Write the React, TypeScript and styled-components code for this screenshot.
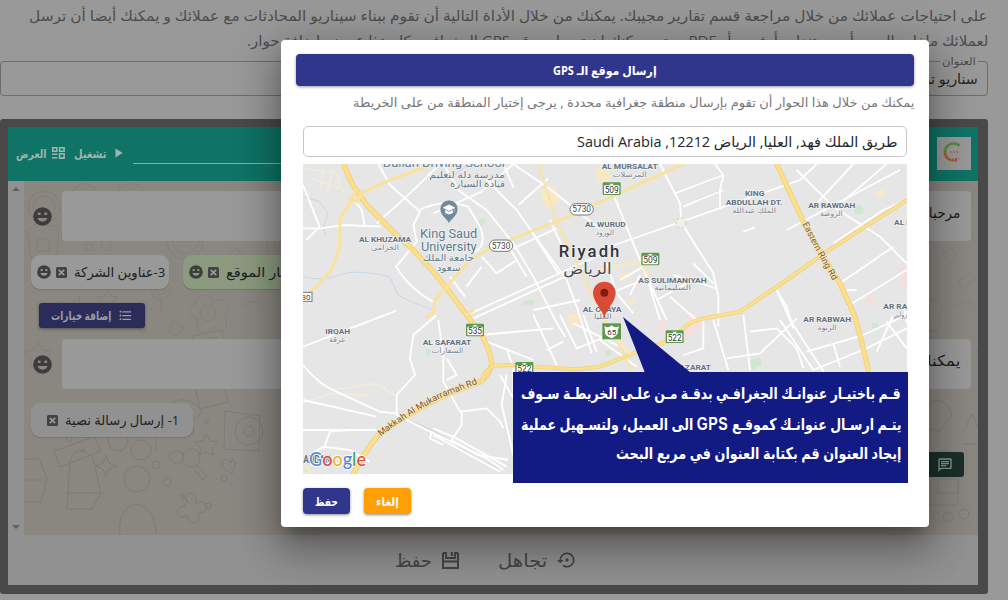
import React, { useLayoutEffect, useRef, useState } from "react";
import styled, { createGlobalStyle } from "styled-components";
import { MdFormatListBulleted, MdOutlineChat, MdSettingsBackupRestore } from "react-icons/md";

const arabic = `"Open Sans", "DejaVu Sans", sans-serif`;

const Global = createGlobalStyle`
  * { box-sizing: border-box; }
  body { margin: 0; overflow: hidden; background: #999; font-family: ${arabic}; }
`;

/* ---------- text set to a measured width ---------- */
const FitBox = styled.span<{ $w: number; $h?: number }>`
  display: block;
  flex: none;
  width: ${(p) => p.$w}px;
  height: ${(p) => (p.$h ? p.$h + "px" : "auto")};
  line-height: ${(p) => (p.$h ? p.$h + "px" : "inherit")};
  white-space: nowrap;
  direction: rtl;
`;
const FitInner = styled.span`
  display: inline-block;
  transform-origin: right center;
`;
function Fit({ w, h, children }: { w: number; h?: number; children: React.ReactNode }) {
  const ref = useRef<HTMLSpanElement>(null);
  const [scale, setScale] = useState(1);
  useLayoutEffect(() => {
    if (ref.current) setScale(w / ref.current.offsetWidth);
  }, [w]);
  return (
    <FitBox $w={w} $h={h}>
      <FitInner ref={ref} style={{ transform: `scaleX(${scale})` }}>{children}</FitInner>
    </FitBox>
  );
}

/* ---------- page behind the dialog ---------- */
const Page = styled.main`
  position: relative;
  width: 1008px;
  height: 600px;
  overflow: hidden;
  direction: rtl;
  background: #999;
  display: flex;
  flex-direction: column;
`;
const Intro = styled.div`
  height: 60px;
  padding: 3px 20px 0 0;
  font-size: 14.5px;
  color: #4d4d4d;
`;
const Field = styled.fieldset`
  width: 988px;
  height: 42px;
  margin: -6px 0 0;
  margin-right: 20px;
  padding: 0 9px 0 0;
  border: 1px solid #6d6d69;
  border-radius: 4px;
  font-size: 15px;
  color: #262626;
  legend { padding: 0 2px; font-size: 11px; line-height: 14px; color: #4b4b4b; }
`;
const Frame = styled.section`
  width: 988px;
  height: 475px;
  margin: 23px 20px 0 0;
  border: solid #494949;
  border-width: 8px 10px 9px 8px;
  border-radius: 3px;
  display: flex;
  flex-direction: column;
`;
const Header = styled.header`
  height: 54px;
  flex: none;
  padding: 0 7px 2px 8px;
  background: #0f7466;
  display: flex;
  align-items: center;
  color: #a2b3b0;
  font-size: 11.5px;
  font-weight: 700;
`;
const LogoTile = styled.div`
  width: 34px;
  height: 33px;
  background: #999;
  display: grid;
  place-items: center;
`;
const TitleLine = styled.div`
  flex: 1;
  height: 1px;
  margin: 21px 16px 0 10px;
  background: #9aa9a6;
`;
const HeaderAction = styled.div<{ $gap: number; $end: number }>`
  display: flex;
  align-items: center;
  gap: ${(p) => p.$gap}px;
  margin-left: ${(p) => p.$end}px;
`;
const Body = styled.div`
  height: 354px;
  flex: none;
  display: flex;
`;
const Canvas = styled.div`
  position: relative;
  flex: 1;
  padding: 10px 7px 0;
`;
const Wallpaper = styled.svg`
  position: absolute;
  inset: 0;
  width: 100%;
  height: 100%;
`;
const Stack = styled.div`
  position: relative;
  display: flex;
  flex-direction: column;
`;
const Scrollbar = styled.div`
  width: 16px;
  background: #919191;
  display: flex;
  flex-direction: column;
  justify-content: space-between;
  align-items: center;
  padding: 5px 0;
`;
const MessageRow = styled.div`
  display: flex;
  align-items: center;
  justify-content: space-between;
  padding-left: 2px;
`;
const Bubble = styled.div`
  width: 909px;
  height: 50px;
  border-radius: 4px;
  background: #999;
  color: #1f1f1f;
  font-size: 15px;
  padding: 10px 11px 0 0;
`;
const ChipRow = styled.div<{ $top: number }>`
  display: flex;
  justify-content: flex-end;
  gap: 14px;
  margin-top: ${(p) => p.$top}px;
`;
const Chip = styled.div<{ $w: number; $green?: boolean; $muted?: boolean }>`
  width: ${(p) => p.$w}px;
  height: 34px;
  display: flex;
  align-items: center;
  justify-content: flex-end;
  gap: 5px;
  padding-left: ${(p) => (p.$muted ? 16 : 6)}px;
  border-radius: 9px;
  background: ${(p) => (p.$green ? "#8c9b80" : p.$muted ? "#919191" : "#999")};
  box-shadow: 0 1px 1px #77746f;
  font-size: 13.5px;
  color: #202323;
  & > span { margin-left: 2px; }
`;
const AddOptions = styled.button`
  align-self: flex-end;
  width: 106px;
  height: 25px;
  margin: 14px 0 11px 8px;
  padding: 0 12px;
  border: 0;
  border-radius: 3px;
  background: #2c2c5b;
  box-shadow: 0 1px 3px #55524f;
  color: #9b9ba6;
  display: flex;
  align-items: center;
  justify-content: space-between;
  font: 700 11.5px ${arabic};
`;
const ChatButton = styled.button`
  width: 64px;
  height: 25px;
  margin: 15px 7px 0 0;
  padding: 0 11px 0 0;
  border: 0;
  border-radius: 3px;
  background: #1b302b;
  color: #8b9995;
  display: flex;
  align-items: center;
`;
const Footer = styled.footer`
  height: 50px;
  flex: none;
  background: #919191;
  color: #454545;
  display: flex;
  justify-content: flex-start;
  align-items: center;
  gap: 39px;
  padding-right: 401px;
  font-size: 18px;
`;
const FooterAction = styled.div`
  display: flex;
  align-items: center;
  gap: 10px;
`;

/* ---------- dialog ---------- */
const Dialog = styled.section`
  position: absolute;
  left: 281px;
  top: 40px;
  width: 648px;
  height: 487px;
  padding: 14px 15px 0;
  border-radius: 4px;
  background: #fff;
  box-shadow: 0 11px 15px -7px rgba(0, 0, 0, 0.3), 0 24px 38px 3px rgba(0, 0, 0, 0.2), 0 9px 46px 8px rgba(0, 0, 0, 0.2);
`;
const DialogTitle = styled.h1`
  height: 32px;
  margin: 0;
  border-radius: 4px;
  background: #31368d;
  box-shadow: 0 1px 3px rgba(0, 0, 0, 0.4);
  color: #fff;
  display: flex;
  align-items: center;
  justify-content: center;
  font-size: 12px;
  font-weight: 700;
`;
const Hint = styled.p`
  margin: 5px 0 0;
  height: 24px;
  font-size: 12.5px;
  color: #77777a;
`;
const Inset = styled.div`
  padding: 0 7px;
`;
const Address = styled.div`
  height: 31px;
  margin: 11px 0 7px;
  padding: 0 8px;
  border: 1px solid #c6c6cc;
  border-radius: 5px;
  color: #20282b;
  font-size: 14.5px;
`;
const MapSvg = styled.svg`
  display: block;
  width: 604px;
  height: 310px;
`;
const Actions = styled.div`
  display: flex;
  direction: ltr;
  gap: 14px;
  margin-top: 14px;
`;
const ActionButton = styled.button<{ $bg: string }>`
  width: 47px;
  height: 26px;
  padding: 0;
  border: 0;
  border-radius: 4px;
  background: ${(p) => p.$bg};
  box-shadow: 0 1px 3px rgba(0, 0, 0, 0.45);
  color: #fff;
  display: flex;
  align-items: center;
  justify-content: center;
  font: 700 11.5px ${arabic};
`;
const Callout = styled.aside`
  position: absolute;
  left: 513px;
  top: 372px;
  width: 395px;
  height: 111px;
  padding: 7px 7px 0;
  background: #121a84;
  color: #fff;
  font: 700 16px "Liberation Sans", "DejaVu Sans", sans-serif;
`;
const Acronym = styled.span`
  font-size: 18px;
  letter-spacing: 0.8px;
`;
const Pointer = styled.svg`
  position: absolute;
  left: 110px;
  top: -55px;
`;

/* ---------- small icons ---------- */
const Smile = ({ size, bg = "#999" }: { size: number; bg?: string }) => (
  <svg width={size} height={size} viewBox="0 0 20 20">
    <circle cx="10" cy="10" r="9.8" fill="#3d3d3d" />
    <rect x="5" y="5.8" width="3.2" height="2.6" rx="1" fill={bg} />
    <rect x="11.8" y="5.8" width="3.2" height="2.6" rx="1" fill={bg} />
    <path d="M4.8 11.6h10.4c-.7 2.4-2.6 3.8-5.2 3.8s-4.5-1.4-5.2-3.8z" fill={bg} />
  </svg>
);
const CloseBox = () => (
  <svg width="11" height="11" viewBox="0 0 11 11">
    <rect width="11" height="11" rx="1.5" fill="#424242" />
    <path d="M2.8 2.8l5.4 5.4M8.2 2.8L2.8 8.2" stroke="#999" strokeWidth="1.7" />
  </svg>
);
const Tiles = () => (
  <svg width="13" height="12" viewBox="0 0 13 12" fill="none" stroke="currentColor" strokeWidth="1.6">
    <path d="M.8 .8h4v3.4h-4zM7.6 .8h4.5v3.4H7.6zM0 7.3h5.4M0 10.8h5.4M7.6 6.8h4.5v4.3H7.6z" />
  </svg>
);
const Play = () => (
  <svg width="8" height="10" viewBox="0 0 8 10"><path d="M.5.5v9L7.7 5z" fill="currentColor" /></svg>
);
const Floppy = () => (
  <svg width="17" height="17" viewBox="0 0 17 17" fill="none" stroke="currentColor" strokeWidth="2">
    <path d="M1 1v15h15V1M1 9.5h15" />
    <path d="M1 1h3v5h9V1h3" strokeWidth="1.8" />
    <path d="M9.8 0v4" />
  </svg>
);
const Logo = () => (
  <svg width="22" height="24" viewBox="0 0 22 24" fill="none" strokeWidth="2.6">
    <path d="M16.5 4.5C10 0 2 4 2 11c0 5 4 9 9 8.500" stroke="#8a7a45" />
    <path d="M16.500 4.500C10 0 2 4 2 11" stroke="#439046" strokeDasharray="2 1.500" />
    <path d="M2 12c0 5 5 9 14 5.500M13 18.500l-1 3.500" stroke="#b34b37" strokeDasharray="2 1.500" />
    <path d="M7 11h8" stroke="#b0603f" strokeWidth="1.600" strokeDasharray="1.600 1.500" />
  </svg>
);

const DoodleWallpaper = () => (
  <Wallpaper>
    <defs>
      <pattern id="doodles" width="238" height="210" patternUnits="userSpaceOnUse">
        <g fill="none" stroke="#7e7a75" strokeWidth="1" opacity=".75">
          <circle cx="20" cy="26" r="16" /><circle cx="20" cy="26" r="11" />
          <path d="M50 8l8-6 12 4 6 9-8 8-4-6-10 2zM3 50l10-8 22 4-2 28-26 4zM13 58h12v12h-12z" />
          <circle cx="65" cy="66" r="4" /><circle cx="82" cy="64" r="5" /><circle cx="100" cy="48" r="3" />
          <path d="M95 8c10-8 22-6 26 3l-12 9c-6-2-12-5-14-12zM143 60a18 18 0 0 0 36 0zM148 60c4 16 22 16 27 0" />
          <path d="M84 108l3 7 7 1-5 5 1 8-6-4-7 4 1-8-5-5 8-1zM55 115l-10 10-8-5-4 7 9 8-7 6 4 6 18-14z" />
          <path d="M127 108c0 14 18 14 20 0M132 108c0 7 9 7 10 0M137 119v14M149 140l-5 10 8 5 8-8zM171 125c0-14 18-14 18-4 12-8 20 5 12 14 6 14-7 20-12 11-9 12-20 2-15-8-10-2-12-11-3-13z" />
          <circle cx="184" cy="132" r="8" /><circle cx="110" cy="104" r="3" /><circle cx="118" cy="148" r="4" />
          <path d="M91 162c-8-10-18 1-8 8l9 5 5-11c2-8-5-10-6-2zM14 160l4 9 10 1-7 7 2 9-9-5-8 5 1-9-7-7 10-1zM168 155l30-6 8 34-29 8zM175 160l18-4 5 20-18 4z" />
          <circle cx="186" cy="169" r="8" /><path d="M213 30c-13 9-8 24 4 23 8-11 11-20 17-27zM220 100l13-8 4 7-13 9zM218 125c8-6 16-6 20 1" />
          <path d="M42 184l10-4 13 4-5 14-19 3zM118 180l7 9 10-10M205 74l8-7 6 8-7 8zM200 202l12-9 8 7" />
        </g>
      </pattern>
    </defs>
    <rect width="100%" height="100%" fill="#8a8680" />
    <rect width="100%" height="100%" fill="url(#doodles)" />
    <g fill="none" stroke="#7e7a75" transform="translate(0 210)">
      <rect width="954" height="144" fill="#8a8680" stroke="none" />
      <path d="M168-18l28-6 8 35-28 7zM32 23a17 12 0 0 0 34 3zM40 23c4-12 20-10 24 2M145 16c8-12 24-8 33 4-5 13-27 13-33-4z" />
      <circle cx="94" cy="50" r="10" /><circle cx="117" cy="59" r="10" /><path d="M88 38l29 6 8-20 7 6v31M30 60l40-14 7 14-41 16zM46 70c5-14 16-13 23-2l8 34-9 16H43zM42 102h40M96 144c-5-38 35-42 36-1M201 20l35 5-1 35-35-2z" />
      <circle cx="113" cy="88" r="13" /><circle cx="167" cy="67" r="9" /><path d="M173 74l10 11-4 4-10-12M145 65c5-8 13-6 15 0-1 9-12 12-15 0zM182 43l4 7 8 1-6 6 1 7-7-3-7 3 2-7-6-6 8-1z" />
      <circle cx="225" cy="40" r="14" /><circle cx="225" cy="40" r="5" />
      <path d="M164 112c-9-14 13-14 7 1 14-8 17 10 2 9 8 12-11 14-9 2-12 8-15-9-2-9-7-8-2-13 2-3zM0 68h15l8 20-6 23H0M2 89h18M207 72c-7-10-14 3-5 7l6 4 3-9c1-6-4-7-4-2zM82 64l3 8 8 3-8 3-3 8-3-8-8-3 8-3z" />
      {[[28, 30], [45, 48], [62, 37], [84, 23], [142, 32], [166, 39], [183, 30], [200, 87], [143, 91], [158, 105], [184, 115], [132, 74], [59, 60]].map(([x, y], i) => <circle key={i} cx={x} cy={y} r={i % 3 + 2} />)}
      <path d="M900 20c12-20 28-6 27 5l-12 15-14-3zM904 70c10-14 25-14 30 0v44h-34zM914 88h20v14h-20zM940 40l8-17 8 18M938 53h16v30" />
      <circle cx="924" cy="126" r="5" /><circle cx="940" cy="123" r="5" />
    </g>
  </Wallpaper>
);

/* ---------- map (coordinates are three units to the pixel) ---------- */
type L = [string, number, number, number, number];
const districts: L[] = [
  ["AL KHUZAMA", 177, 333, 246, 23], ["AL WURUD", 855, 977, 200, 23], ["AL OLAYA", 848, 965, 456, 23],
  ["AL MURSALAT", 905, 1073, 27, 23], ["KING", 1335, 1393, 109, 23], ["ABDULLAH DT.", 1277, 1447, 134, 23],
  ["AR RAWDAH", 1525, 1666, 144, 23], ["AL R", 1782, 1835, 195, 23], ["AS SULIMANIYAH", 1015, 1220, 368, 23],
  ["AR RABWAH", 1510, 1653, 485, 23], ["AR RA", 1750, 1822, 447, 23], ["IRQAH", 76, 150, 521, 23],
  ["AL SAFARAT", 368, 514, 554, 23], ["AL WAZARAT", 1080, 1233, 631, 23], ["BANBAN", -6, 92, 908, 30],
];
const arabicNames: L[] = [
  ["الخزامى", 213, 297, 269, 22], ["الورود", 888, 942, 224, 22], ["العليا", 882, 935, 477, 22],
  ["المرسلات", 938, 1040, 51, 22], ["الملك عبدالله", 1297, 1428, 158, 22], ["الروضة", 1560, 1628, 168, 22],
  ["السليمانية", 1063, 1173, 391, 22], ["الربوة", 1553, 1609, 509, 22], ["روابي", 1780, 1821, 472, 22],
  ["عرقة", 87, 137, 545, 22], ["السفارات", 395, 490, 578, 22],
];
const places: L[] = [
  ["Dallah Driving School", 248, 615, 22, 35], ["مدرسة دلة لتعليم", 388, 615, 53, 27], ["قيادة السيارة", 450, 615, 82, 27],
  ["King Saud", 360, 532, 234, 36], ["University", 363, 530, 273, 36], ["جامعة الملك", 368, 522, 304, 28], ["سعود", 410, 482, 332, 28],
];
function Labels({ items, fill, weight, spaced }: { items: L[]; fill: string; weight: number; spaced?: boolean }) {
  return (
    <g fill={fill} fontWeight={weight} fontFamily='Roboto, "DejaVu Sans", sans-serif' stroke="#f2f2f2" strokeWidth="4" paintOrder="stroke" strokeLinejoin="round">
      {items.map(([t, a, b, y, s]) => (
        <text key={t} x={(a + b) / 2} y={y} fontSize={s} textAnchor="middle" textLength={b - a} lengthAdjust={spaced ? "spacing" : "spacingAndGlyphs"}>{t}</text>
      ))}
    </g>
  );
}
const Shield = ({ x, y, n }: { x: number; y: number; n: string }) => (
  <g>
    <rect x={x - 27} y={y - 19} width="54" height="38" rx="4" fill="#5b9a4a" />
    <rect x={x - 23} y={y - 10} width="46" height="26" rx="3" fill="#fff" />
    <path d={`M${x - 7} ${y - 15}h14l-7 6z`} fill="#fff" />
    <text x={x} y={y + 12} textAnchor="middle" fontSize="25" fill="#333" fontFamily="Roboto, sans-serif">{n}</text>
  </g>
);
const Pill = ({ x, y }: { x: number; y: number }) => (
  <g>
    <rect x={x - 35} y={y - 17} width="70" height="34" rx="17" fill="#fff" stroke="#777" strokeWidth="3" />
    <text x={x} y={y + 9} textAnchor="middle" fontSize="25" fill="#444" fontFamily="Roboto, sans-serif">5730</text>
  </g>
);

const CityMap = () => (
  <MapSvg viewBox="9 12 1812 930" direction="ltr">
    <rect x="9" y="12" width="1812" height="930" fill="#e6e6e7" />
    <g fill="#f8e9c5">
      <path d="M720 90l45-15 15 50-40 20zM885 30l40-10 8 40-40 10zM900 12h15v50h-15zM1725 95l25-10 5 20-20 10zM1660 205l20-12 8 18-20 10zM805 462l30 0 8 25-35 20zM955 345l40-8 3 15-35 8zM985 422l20-6 3 12-20 6z" />
    </g>
    <g fill="#f6dfdb"><path d="M1155 468h50v30l-50 45zM1800 330l21-12v60l-16 3zM1075 490l25-10v30l-20 5zM1700 400l25 25-5 20-25-25z" /></g>
    <g fill="#cde8cf">
      <path d="M528 185l20-10 10 12-22 18zM1190 118l75-32 5 5-75 34zM660 435l22-15 26 2-10 15zM1350 600l30-10 5 25-30 15zM1715 488h20v16h-20zM378 565l14 6-2 14-12 4z" />
      <circle cx="1677" cy="150" r="14" /><circle cx="925" cy="580" r="10" />
    </g>
    <g fill="none" stroke="#c9d8e8" strokeWidth="3">
      <path d="M9 110l50 15 25 35-15 45 10 25M9 350q60 15 110-5t150 5l25 55 40 20 70 28M320 780q80 25 150 75t140 75M510 12l-80 55" />
    </g>
    <g fill="none" stroke="#f3eed8" strokeWidth="4">
      <path d="M50 670l50 20 130-20 60 40M9 730l80-30 120 5M10 25l100 15 20 60M30 55l90 30M70 20l-10 70M100 25l-20 75" />
    </g>
    <g fill="none" stroke="#fff" strokeWidth="5.5" strokeLinejoin="round">
      <path d="M9 205h55l65-10 115 5M155 110l30 40 10 50M230 190l100-90 90-88M235 12l35 63 90 80-20 40 10 50-62 75q40 65 110 105M9 75l50 125-40 40" />
      <path d="M360 150q65-35 145-10l35 60q25 60-25 80M460 80l100 70 80 100 60 100 60 120 35 60M560 60l90 90 70 100 80 110 30 80 45 140M400 160l145-65 95-83M430 12l40 68M640 12l110 75 150 120M655 135l90-80M610 12l30 70M545 290l45 50 60-40M450 350l45 60" />
      <path d="M500 465l400-180M520 475l330-150M620 250l60 100M685 200l90 140M750 180l50 110M640 265l130-60" />
      <path d="M935 90l105 260 40 130M1080 12l60 118 5 60 95 150 15 70v90M900 270l230-80 370-130 50-48M1125 100l145-55M1150 140l120-50M1245 12l25 33-10 45v55M1490 30l110 110 140 90 80 80M1550 130L1660 12M1610 140L1760 12M1460 210l340-180M1330 215l35-12M1600 250l150-100 70-30M1620 370l160-110M1640 440l180-110M1640 390h30M1810 430l11 60" />
      <path d="M920 310l30 90 50 60M930 400l110-45M960 360l70-40M1040 350l60 130M1120 345l130 40M1180 310l60 60M1020 345l-30 60M1110 410l80 70M1070 420l90-50M1430 390l40 90 150 230M1430 390l30 50 20 65" />
      <path d="M9 560l280-108M9 615q50 60 100 80l130 60 50 5M9 810h221M700 450l140-30M410 465l-70 60-10 70 15 50-55 60v60l90 45 180 85 50 35" />
      <path d="M415 480l15 105v80l50 90 80-10 40 40 10 20M440 595l30 50-30 15M485 755v40l-30 45 80 45 90 15M400 825l200 110M400 805l70 30 150 85M395 815l-5 20 40 20M560 545l140 55M540 525l220-20M600 645l40 70v-90l-20-60M620 645l-15 90 40 170" />
      <path d="M700 465l70 150M780 465l50 100 100-40M850 465l40 110M740 570l50-25M820 490l140 70M900 540l110 80" />
      <path d="M1210 480v85l-60 20M1240 480l45 150M1330 465l20 165M1280 595l100-15 110-105M1350 515l80-10 60 60 20 60M1440 480l100 150M1520 575l170-50 130-60M1540 630l160-65 121-60M1760 485l60 80M1780 465l-50 110M1600 550l20 70" />
      <path d="M9 900l60-40 80 10 60 35M70 870l20-55 60-5M500 380l45-60M9 720l220 50" />
    </g>
    <g fill="none" strokeLinecap="round" strokeLinejoin="round">
      <path d="M130 12l28 63 42 60 90 90 50 45 60 65 40 50 60 80 48 65q25 50 27 80-5 35-35 55l-80 30q-115 50-225 130-45 55-75 117" stroke="#efd07b" strokeWidth="16" />
      <path d="M130 12l28 63 42 60 90 90 50 45 60 65 40 50 60 80 48 65q25 50 27 80-5 35-35 55l-80 30q-115 50-225 130-45 55-75 117" stroke="#fbdf8b" strokeWidth="11" />
      <path d="M165 90l-5 25-40 60-1 85-24 70-55 60-31 20M150 110l20 15 20-30M180 100l80-35 140-53M1150 12l-50 23-240 110-90 40-80 30-130 55-50 30-70 80-35 40-5 40-20 10M500 465l20-15" stroke="#fae29a" strokeWidth="9" />
      <path d="M715 12l55 173 80 165 55 110 55 100 40 80" stroke="#f8e4a9" strokeWidth="7" />
      <path d="M1821 120l-141 90-115 75-105 75-140 95-120 23q-45 12-70 50l-30 17-100 35-100 40-70 8-130-8-60-5-60 2-25 20-10 30" stroke="#efd07b" strokeWidth="12" />
      <path d="M1821 120l-141 90-115 75-105 75-140 95-120 23q-45 12-70 50l-30 17-100 35-100 40-70 8-130-8-60-5-60 2-25 20-10 30" stroke="#fbe08f" strokeWidth="8" />
      <path d="M1430 12l80 173 60 105 50 80 45 100 25 95 15 65" stroke="#efd07b" strokeWidth="16" />
      <path d="M1430 12l80 173 60 105 50 80 45 100 25 95 15 65" stroke="#fbdf8b" strokeWidth="11" />
      <path d="M900 330l120-25 30 50M930 520l60 60M9 880l20 60" stroke="#faeab9" strokeWidth="7" />
    </g>
    <circle cx="1143" cy="189" r="15" fill="#eef2e9" stroke="#c3dac1" strokeWidth="4" strokeDasharray="6 8" />
    <Labels items={districts} fill="#647184" weight={700} />
    <Labels items={arabicNames} fill="#7d8494" weight={400} />
    <Labels items={places} fill="#607b8d" weight={400} />
    <Labels items={[["Riyadh", 776, 958, 291, 50]]} fill="#30323d" weight={500} spaced />
    <Labels items={[["الرياض", 790, 935, 343, 46]]} fill="#4a4b56" weight={400} />
    <defs>
      <path id="ring" d="M1507 192l45 88 62 110" />
      <path id="makkah" d="M242 830q95-75 190-120l130-50" />
    </defs>
    <g fill="#7c5440" fontSize="27" fontFamily="Roboto, sans-serif" stroke="#faebbd" strokeWidth="4" paintOrder="stroke">
      <text textLength="193" lengthAdjust="spacingAndGlyphs"><textPath href="#ring">Eastern Ring Rd</textPath></text>
      <text textLength="333" lengthAdjust="spacingAndGlyphs"><textPath href="#makkah">Makkah Al Mukarramah Rd</textPath></text>
    </g>
    <Pill x={845} y={148} /><Pill x={603} y={257} />
    <Shield x={935} y={86} n="509" /><Shield x={1051} y={297} n="509" />
    <Shield x={525} y={510} n="535" /><Shield x={673} y={625} n="522" /><Shield x={1124} y={530} n="522" />
    <rect x="907" y="490" width="56" height="48" fill="#5b9a4a" />
    <path d="M913 498q11 8 22-2 11 10 22 2l-4 15q4 12-18 22-24-8-20-22z" fill="#fff" />
    <text x="935" y="524" textAnchor="middle" fontSize="24" fontFamily="Roboto, sans-serif" fill="#333">65</text>
    <rect x="-12" y="397" width="48" height="27" fill="#fff" stroke="#777" strokeWidth="3" />
    <text x="18" y="419" textAnchor="middle" fontSize="24" fontFamily="Roboto, sans-serif" fill="#444">80</text>
    <path d="M447 192c-3-13-27-24-27-45a27 27 0 0 1 54 0c0 21-24 32-27 45z" fill="#71899a" stroke="#e9eef1" strokeWidth="2" />
    <path d="M447 134l-18 9 18 9 18-9zM436 150v9q11 7 22 0v-9l-11 6zM464 145v12" fill="#fff" stroke="#fff" strokeWidth="1" />
    <path d="M913 475c-4-25-34-50-34-76a34 34 0 0 1 68 0c0 26-30 51-34 76z" fill="#db4a35" />
    <circle cx="913" cy="398" r="12" fill="#7f1b10" />
    <text x="27" y="918" fontFamily="Lato, sans-serif" fontSize="55" fontWeight="500" textLength="171" lengthAdjust="spacingAndGlyphs" stroke="#fff" strokeWidth="5" paintOrder="stroke">
      <tspan fill="#5b8fe0">G</tspan><tspan fill="#dc4c3e">o</tspan><tspan fill="#eeb52d">o</tspan><tspan fill="#5485d7">g</tspan><tspan fill="#3ca65b">l</tspan><tspan fill="#dc4c3e">e</tspan>
    </text>
  </MapSvg>
);

export default function App() {
  return (
    <>
      <Global />
      <Page>
        <Intro>
          <Fit w={959} h={25}>على احتياجات عملائك من خلال مراجعة قسم تقارير مجيبك. يمكنك من خلال الأداة التالية أن تقوم ببناء سيناريو المحادثات مع عملائك و يمكنك أيضا أن ترسل</Fit>
          <Fit w={741} h={25}>لعملائك ملفات الصور أو مستندات أوفيس أو PDF وحتى يمكنك ان ترسل موقع GPS الجغرافي بكل هذا عبر زر إضافة حوار.</Fit>
        </Intro>
        <Field>
          <legend><Fit w={34}>العنوان</Fit></legend>
          <Fit w={82} h={20}>سناريو ترحيب</Fit>
        </Field>
        <Frame>
          <Header>
            <LogoTile><Logo /></LogoTile>
            <TitleLine />
            <HeaderAction $gap={9} $end={9}><Play /><Fit w={32}>تشغيل</Fit></HeaderAction>
            <HeaderAction $gap={6} $end={0}><Tiles /><Fit w={30}>العرض</Fit></HeaderAction>
          </Header>
          <Body>
            <Canvas>
              <DoodleWallpaper />
              <Stack>
                <MessageRow><Bubble><Fit w={50} h={22}>مرحبا بك</Fit></Bubble><Smile size={19} bg="#8a8680" /></MessageRow>
                <ChipRow $top={14}>
                  <Chip $w={150} $green><Fit w={90}>2-إختيار الموقع</Fit><CloseBox /><Smile size={14} bg="#8c9b80" /></Chip>
                  <Chip $w={138}><Fit w={91}>3-عناوين الشركة</Fit><CloseBox /><Smile size={14} /></Chip>
                </ChipRow>
                <AddOptions><MdFormatListBulleted size={15} /><Fit w={60}>إضافة خيارات</Fit></AddOptions>
                <MessageRow><Bubble><Fit w={42} h={22}>يمكنك</Fit></Bubble><Smile size={19} bg="#8a8680" /></MessageRow>
                <ChipRow $top={14}>
                  <Chip $w={162} $muted><Fit w={114}>1- إرسال رسالة نصية</Fit><CloseBox /></Chip>
                </ChipRow>
                <ChatButton><MdOutlineChat size={16} /></ChatButton>
              </Stack>
            </Canvas>
            <Scrollbar>
              <svg width="8" height="5"><path d="M0 5l4-4 4 4z" fill="#616161" /></svg>
              <svg width="8" height="5"><path d="M0 0l4 4 4-4z" fill="#616161" /></svg>
            </Scrollbar>
          </Body>
          <Footer>
            <FooterAction><MdSettingsBackupRestore size={20} /><Fit w={49}>تجاهل</Fit></FooterAction>
            <FooterAction><Floppy /><Fit w={37}>حفظ</Fit></FooterAction>
          </Footer>
        </Frame>

        <Dialog>
          <DialogTitle><Fit w={104}>إرسال موقع الـ GPS</Fit></DialogTitle>
          <Hint><Fit w={561} h={24}>يمكنك من خلال هذا الحوار أن تقوم بإرسال منطقة جغرافية محددة , يرجى إختيار المنطقة من على الخريطة</Fit></Hint>
          <Inset>
            <Address><Fit w={321} h={29}>طريق الملك فهد, العليا, الرياض 12212, <bdi>Saudi Arabia</bdi></Fit></Address>
            <CityMap />
            <Actions>
              <ActionButton $bg="#31368d"><Fit w={23}>حفظ</Fit></ActionButton>
              <ActionButton $bg="#ff9f05"><Fit w={23}>إلغاء</Fit></ActionButton>
            </Actions>
          </Inset>
        </Dialog>
        <Callout>
          <Pointer width="70" height="56"><path d="M0 0l22 56h46z" fill="#121a84" /></Pointer>
          <Fit w={380} h={30}>قـم باختيـار عنوانـك الجغرافـي بدقـة مـن علـى الخريطـة سـوف</Fit>
          <Fit w={380} h={30}>يتـم ارسـال عنوانـك كموقـع <Acronym>GPS</Acronym> الى العميل، ولتسـهيل عملية</Fit>
          <Fit w={285} h={30}>إيجاد العنوان قم بكتابة العنوان في مربع البحث</Fit>
        </Callout>
      </Page>
    </>
  );
}
